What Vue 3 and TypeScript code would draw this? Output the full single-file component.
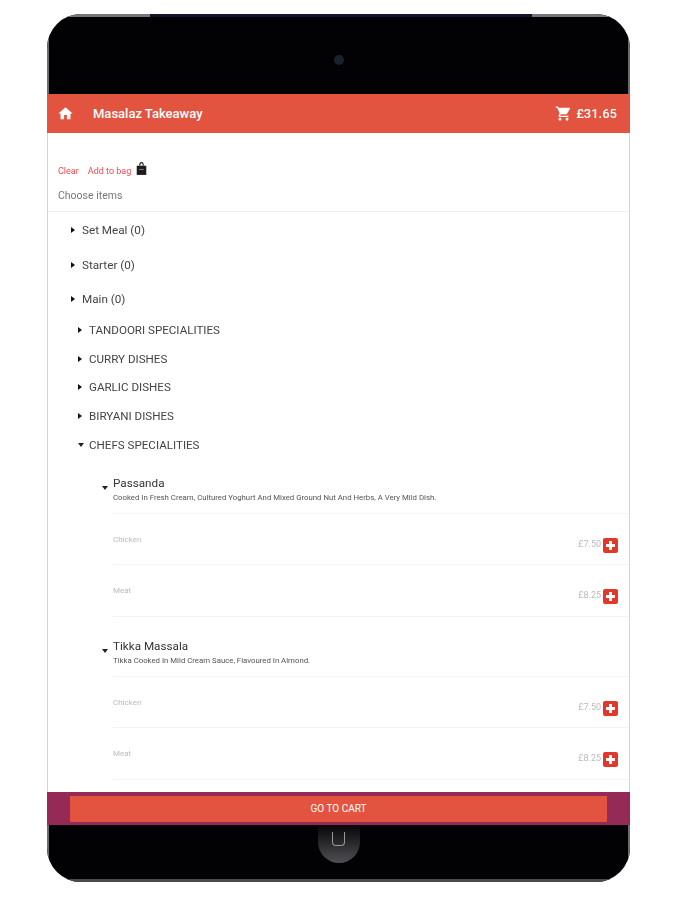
<template>
  <div class="device">
    <div class="bezel-top">
      <span class="camera"></span>
    </div>

    <header class="topbar">
      <svg class="home" viewBox="0 0 24 24"><path d="M10 20v-6h4v6h5v-8h3L12 3 2 12h3v8z" /></svg>
      <span class="title">Masalaz Takeaway</span>
      <svg class="cart" viewBox="0 0 24 24">
        <path d="M7 18c-1.1 0-2 .9-2 2s.9 2 2 2 2-.9 2-2-.9-2-2-2zM1 2v2h2l3.6 7.59-1.35 2.45c-.16.28-.25.61-.25.96 0 1.1.9 2 2 2h12v-2H7.42c-.14 0-.25-.11-.25-.25l.03-.12.9-1.63h7.45c.75 0 1.41-.41 1.75-1.03l3.58-6.49A1 1 0 0 0 20 4H5.21l-.94-2H1zm16 16c-1.1 0-2 .9-2 2s.9 2 2 2 2-.9 2-2-.9-2-2-2z" />
      </svg>
      <span class="total">£31.65</span>
    </header>

    <main class="content">
      <div class="actions">
        <a class="link">Clear</a>
        <a class="link">Add to bag</a>
        <svg class="bag" viewBox="0 0 12 16">
          <path d="M3.6 5V3.4a2.4 2.4 0 0 1 4.8 0V5H7.2V3.4a1.2 1.2 0 0 0-2.4 0V5z" />
          <path d="M.8 5h10.4v10H.8z" />
          <path class="bag-slot" d="M3.5 8.5h5v1h-5z" />
        </svg>
      </div>
      <div class="choose">Choose items</div>

      <div class="categories">
        <div class="category" v-for="c in categories" :key="c">
          <span class="caret right"></span>{{ c }}
        </div>
      </div>

      <div class="subs">
        <div class="sub" v-for="s in subCategories" :key="s">
          <span class="caret right"></span>{{ s }}
        </div>
        <div class="sub">
          <span class="caret down"></span>CHEFS SPECIALITIES
        </div>
      </div>

      <section class="dish" v-for="d in dishes" :key="d.name">
        <div class="dish-head">
          <span class="caret down dish-caret"></span>
          <div class="dish-name">{{ d.name }}</div>
          <div class="dish-desc">{{ d.desc }}</div>
        </div>
        <div class="option" v-for="o in d.options" :key="o.label">
          <span class="option-label">{{ o.label }}</span>
          <span class="price">{{ o.price }}</span>
          <span class="add"></span>
        </div>
      </section>
    </main>

    <footer class="footer">
      <button class="go">GO TO CART</button>
    </footer>

    <div class="bezel-bottom">
      <span class="home-button"><span class="home-glyph"></span></span>
    </div>
  </div>
</template>

<script setup lang="ts">
const categories = ['Set Meal (0)', 'Starter (0)', 'Main (0)']
const subCategories = ['TANDOORI SPECIALITIES', 'CURRY DISHES', 'GARLIC DISHES', 'BIRYANI DISHES']

const options = [
  { label: 'Chicken', price: '£7.50' },
  { label: 'Meat', price: '£8.25' },
]

const dishes = [
  {
    name: 'Passanda',
    desc: 'Cooked In Fresh Cream, Cultured Yoghurt And Mixed Ground Nut And Herbs, A Very Mild Dish.',
    options,
  },
  {
    name: 'Tikka Massala',
    desc: 'Tikka Cooked In Mild Cream Sauce, Flavoured In Almond.',
    options,
  },
]
</script>

<style scoped>
.device {
  width: 583px;
  height: 868px;
  margin: 14px 0 0 47px;
  display: flex;
  flex-direction: column;
  overflow: hidden;
  border-radius: 34px;
  background: #fff;
  font-family: Roboto, "Liberation Sans", sans-serif;
  filter: blur(0.6px);
}

.bezel-top {
  height: 80px;
  flex: none;
  display: flex;
  justify-content: center;
  align-items: center;
  padding-top: 11px;
  box-sizing: border-box;
  background:
    linear-gradient(90deg, #77777b 0 101px, #14142a 101px 483px, #77777b 483px) top / 100% 3px no-repeat,
    #020204;
  border-left: 2px solid #6c6c70;
  border-right: 2px solid #6c6c70;
}

.camera {
  width: 10px;
  height: 10px;
  border-radius: 50%;
  background: #1a2230;
}

.topbar {
  height: 39px;
  flex: none;
  display: flex;
  align-items: center;
  padding: 0 13px 0 10px;
  background: #e25440;
  color: #fff;
  font-weight: 500;
}

.home {
  width: 17px;
  height: 17px;
  fill: #fff;
}

.title {
  flex: 1;
  margin-left: 19px;
  font-size: 13px;
}

.cart {
  width: 17px;
  height: 17px;
  margin-right: 4px;
  fill: #fff;
}

.total {
  font-size: 13px;
}

.content {
  flex: 1;
  min-height: 0;
  overflow: hidden;
  border-left: 1px solid #d4d4d4;
  border-right: 1px solid #d4d4d4;
}

.actions {
  display: flex;
  align-items: flex-end;
  height: 27px;
  margin-top: 20px;
  padding-left: 10px;
  box-sizing: border-box;
}

.link {
  margin-right: 9px;
  color: #ee4a56;
  font-size: 9px;
  line-height: 17px;
}

.bag {
  width: 11px;
  height: 15px;
  margin: 0 0 4px -4px;
  fill: #1c1c1e;
}

.bag-slot {
  fill: #888;
}

.choose {
  height: 32px;
  padding: 7px 0 0 10px;
  box-sizing: border-box;
  border-bottom: 1px solid #f0f0f0;
  color: #777;
  font-size: 10.5px;
  line-height: 18px;
}

.categories {
  margin: 1px 0 -1px;
}

.category {
  height: 34.5px;
  display: flex;
  align-items: center;
  padding-left: 23px;
  color: #444;
  font-size: 11.7px;
}

.sub {
  height: 28.7px;
  display: flex;
  align-items: center;
  padding-left: 30px;
  color: #444;
  font-size: 11.6px;
}

.caret {
  flex: none;
  width: 0;
  height: 0;
  margin-right: 7px;
  border-style: solid;
  border-color: transparent;
}

.caret.right {
  border-width: 3.5px 0 3.5px 4px;
  border-left-color: #111;
}

.caret.down {
  margin-right: 4px;
  border-width: 4px 3.5px 0;
  border-top-color: #222;
}

.subs .caret.down {
  margin-right: 5px;
}

.subs {
  margin-bottom: 17px;
}

.dish {
  margin: 0 0 22px 65px;
}

.dish-head {
  position: relative;
  height: 37px;
  border-bottom: 1px solid #f4f4f4;
}

.dish-caret {
  position: absolute;
  left: -11px;
  top: 10px;
}

.dish-name {
  color: #333;
  font-size: 11.7px;
  line-height: 15px;
}

.dish-desc {
  margin-top: 1px;
  color: #555;
  font-size: 7.8px;
  line-height: 12px;
}

.option {
  height: 51.5px;
  display: flex;
  align-items: flex-start;
  padding-right: 11px;
  border-bottom: 1px solid #f4f4f4;
  box-sizing: border-box;
}

.option-label {
  flex: 1;
  margin-top: 20px;
  color: #bbb;
  font-size: 8px;
  line-height: 12px;
}

.price {
  margin-top: 24px;
  color: #bbb;
  font-size: 9px;
  line-height: 12px;
}

.add {
  position: relative;
  width: 15px;
  height: 15px;
  margin: 24px 0 0 2px;
  border-radius: 2px;
  background: #e2382a;
}

.add::before,
.add::after {
  content: "";
  position: absolute;
  background: #fff;
}

.add::before {
  left: 3px;
  top: 6px;
  width: 9px;
  height: 3px;
}

.add::after {
  left: 6px;
  top: 3px;
  width: 3px;
  height: 9px;
}

.footer {
  height: 33px;
  flex: none;
  display: flex;
  justify-content: center;
  padding: 4px 0 3px;
  box-sizing: border-box;
  background: #942a55;
}

.go {
  width: 537px;
  border: 0;
  padding: 0 0 2px;
  background: #e25440;
  color: #fff;
  font-family: inherit;
  font-size: 10px;
  font-weight: 400;
}

.bezel-bottom {
  height: 57px;
  flex: none;
  display: flex;
  justify-content: center;
  box-sizing: border-box;
  background: #020204;
  border-bottom: 3px solid #4a4a50;
  border-left: 2px solid #6c6c70;
  border-right: 2px solid #6c6c70;
}

.home-button {
  width: 42px;
  height: 38px;
  display: flex;
  justify-content: center;
  border-radius: 0 0 21px 21px;
  background: linear-gradient(#060607, #505054);
}

.home-glyph {
  width: 13px;
  height: 14px;
  margin-top: 7px;
  box-sizing: border-box;
  border: 1px solid #999;
  border-top: 0;
  border-radius: 0 0 4px 4px;
}
</style>
